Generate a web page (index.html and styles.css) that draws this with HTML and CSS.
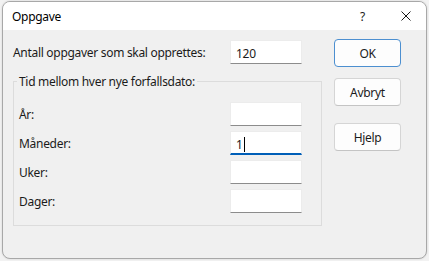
FILE: index.html
```html
<!DOCTYPE html>
<html lang="no">
<head>
<meta charset="utf-8">
<title>Oppgave</title>
<link rel="stylesheet" href="styles.css">
</head>
<body>
<div class="window">
  <div class="titlebar">
    <span class="title">Oppgave</span>
    <span class="help">?</span>
    <span class="close">
      <svg width="10" height="10" viewBox="0 0 10 10"><path d="M0.5 0.5 L9.5 9.5 M9.5 0.5 L0.5 9.5" stroke="#1a1a1a" stroke-width="1" fill="none"/></svg>
    </span>
  </div>
  <div class="content">
    <div class="main">
      <div class="row first">
        <span class="label">Antall oppgaver som skal opprettes:</span>
        <div class="field">120</div>
      </div>
      <fieldset class="group">
        <legend>Tid mellom hver nye forfallsdato:</legend>
        <div class="row">
          <span class="label">År:</span>
          <div class="field"></div>
        </div>
        <div class="row">
          <span class="label">Måneder:</span>
          <div class="field focused">1<span class="caret"></span></div>
        </div>
        <div class="row">
          <span class="label">Uker:</span>
          <div class="field"></div>
        </div>
        <div class="row">
          <span class="label">Dager:</span>
          <div class="field"></div>
        </div>
      </fieldset>
    </div>
    <div class="buttons">
      <button class="btn default">OK</button>
      <button class="btn cancel">Avbryt</button>
      <button class="btn helpbtn">Hjelp</button>
    </div>
  </div>
</div>
</body>
</html>
```
FILE: styles.css
```css
html, body {
  margin: 0;
  padding: 0;
}
body {
  background: #f2f2f2;
  width: 429px;
  height: 261px;
  overflow: hidden;
  padding: 1px 0 0 2px;
  box-sizing: border-box;
  font-family: "Noto Sans", "Open Sans", sans-serif;
  font-size: 12px;
  letter-spacing: -0.3px;
  color: #1b1b1b;
}
.window {
  width: 425px;
  height: 258px;
  box-sizing: border-box;
  border: 1px solid #a8a8a8;
  border-radius: 8px;
  background: #f0f0f0;
  overflow: hidden;
  display: flex;
  flex-direction: column;
  box-shadow: 0 0 2px rgba(0,0,0,0.15);
}
.titlebar {
  height: 28px;
  flex: none;
  background: #ffffff;
  display: flex;
  align-items: center;
  padding-left: 9px;
}
.title {
  color: #000;
  flex: 1;
}
.help {
  color: #1a1a1a;
  margin-right: 36px;
}
.close {
  display: flex;
  margin-right: 15px;
}
.content {
  display: flex;
  flex: 1;
}
.main {
  margin-left: 10px;
  width: 309px;
  padding-top: 10px;
}
.row {
  display: grid;
  grid-template-columns: 211px 72px;
  align-items: center;
  height: 24px;
}
.row.first {
  grid-template-columns: 217px 72px;
}
.row + .row {
  margin-top: 5px;
}
.field {
  height: 24px;
  box-sizing: border-box;
  background: #fff;
  border: 1px solid #ececec;
  border-bottom: 1px solid #8c8c8c;
  padding: 3px 5px 0;
  line-height: 17px;
  display: flex;
  align-items: center;
}
.field.focused {
  border-bottom: 2px solid #005fb8;
}
.caret {
  display: inline-block;
  width: 1px;
  height: 15px;
  background: #000;
  margin-left: 1px;
}
.group {
  margin: 9px 0 0;
  border: 1px solid #dcdcdc;
  padding: 12px 0 10px 5px;
  height: 153px;
  box-sizing: border-box;
}
.group legend {
  padding: 0 2px;
  margin-left: -2px;
}
.buttons {
  margin-left: 12px;
  padding-top: 9px;
  display: flex;
  flex-direction: column;
  width: 67px;
}
.btn {
  font-family: inherit;
  font-size: 12px;
  letter-spacing: -0.3px;
  color: #1b1b1b;
  height: 28px;
  background: #fdfdfd;
  border: 1px solid #d5d5d5;
  border-bottom-color: #c4c4c4;
  border-radius: 4px;
  padding: 0;
}
.btn.default {
  border: 1px solid #4c8fd0;
}
.btn.cancel {
  margin-top: 11px;
}
.btn.helpbtn {
  margin-top: 17px;
}
```
